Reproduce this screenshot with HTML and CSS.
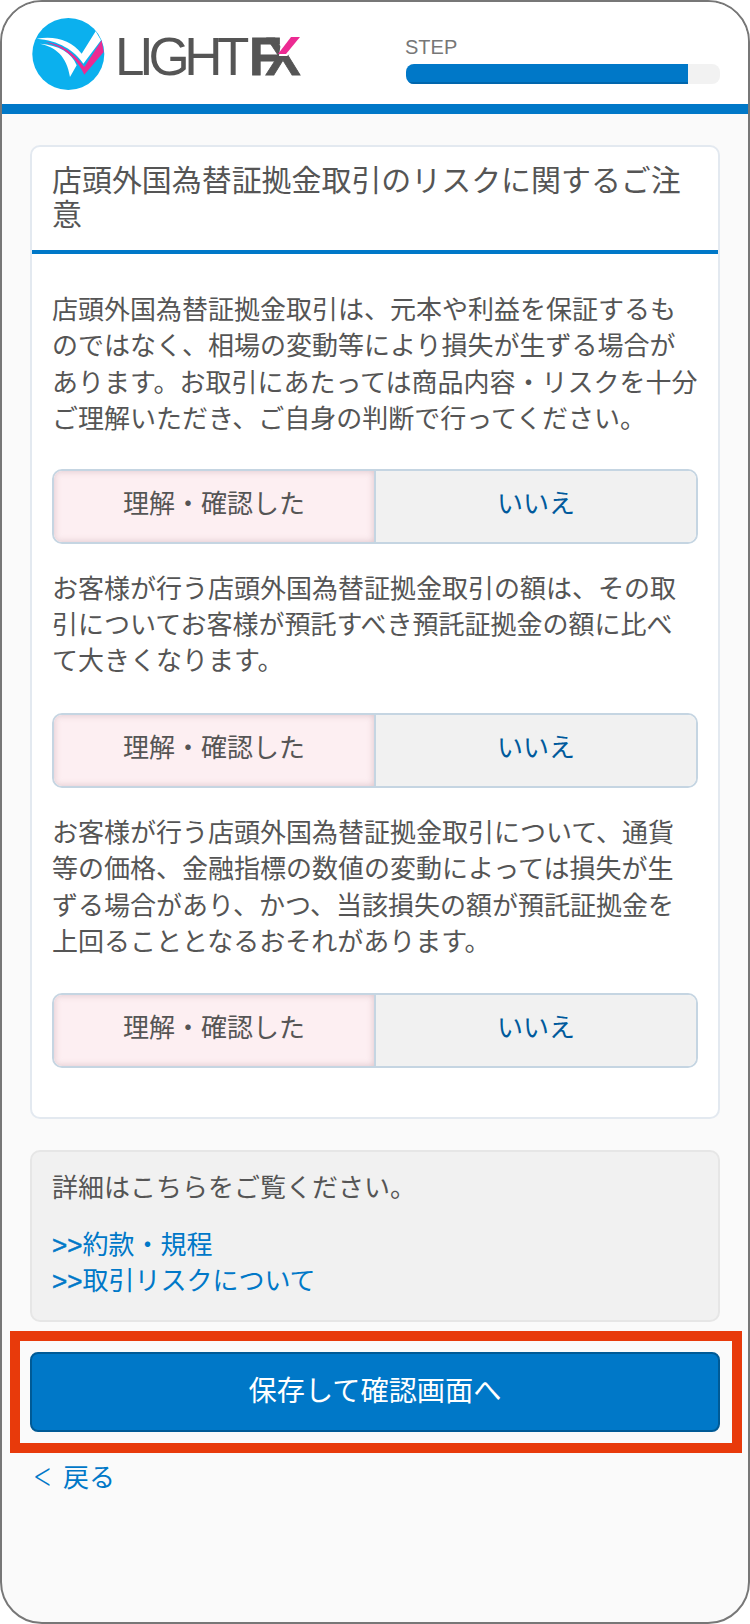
FILE: index.html
```html
<!DOCTYPE html>
<html lang="ja">
	<head>
		<meta charset="UTF-8" />
		<title>リスクに関するご注意</title>
		<link rel="stylesheet" href="styles.css">
	</head>
	<body>
		<div class="frame">
			<div class="header">
				<svg class="logo" width="280" height="84" viewBox="25 12 280 84">
					<circle cx="68.3" cy="54" r="36" fill="#0bb0ee" />
					<g transform="translate(25 12) scale(0.3333)">
						<path fill="#fff" d="M35 80C90 70 140 85 170 125L212 58L228 85L175 155C150 115 100 85 35 80Z" />
						<path fill="#fff" d="M45 95C90 105 125 130 135 195L155 160C140 120 100 100 45 95Z" />
						<path fill="#ec2a92" d="M60 90C110 95 150 125 178 165L230 85L236 120L178 188C155 140 120 105 60 90Z" />
					</g>
					<text class="logo-light" x="115" y="75">LIGHT</text>
					<text class="logo-fx" x="249" y="75">FX</text>
					<polygon fill="#fff" points="282,35 303,35 303,45 287,56 279,56" />
					<polygon fill="#ec2a92" points="291,37 300,37 286,54 278,54" />
				</svg>
				<div class="step">
					<span class="step-label">STEP</span>
					<div class="step-bar"><div class="step-fill"></div></div>
				</div>
			</div>
			<div class="main">
				<div class="card">
					<h2 class="card-title">店頭外国為替証拠金取引のリスクに関するご注意</h2>
					<div class="card-body">
						<p>店頭外国為替証拠金取引は、元本や利益を保証するも<br>のではなく、相場の変動等により損失が生ずる場合が<br>あります。お取引にあたっては商品内容・リスクを十分<br>ご理解いただき、ご自身の判断で行ってください。</p>
						<div class="choice">
							<span class="yes">理解・確認した</span>
							<span class="no">いいえ</span>
						</div>
						<p>お客様が行う店頭外国為替証拠金取引の額は、その取<br>引についてお客様が預託すべき預託証拠金の額に比べ<br>て大きくなります。</p>
						<div class="choice">
							<span class="yes">理解・確認した</span>
							<span class="no">いいえ</span>
						</div>
						<p>お客様が行う店頭外国為替証拠金取引について、通貨<br>等の価格、金融指標の数値の変動によっては損失が生<br>ずる場合があり、かつ、当該損失の額が預託証拠金を<br>上回ることとなるおそれがあります。</p>
						<div class="choice">
							<span class="yes">理解・確認した</span>
							<span class="no">いいえ</span>
						</div>
					</div>
				</div>
				<div class="well">
					<p>詳細はこちらをご覧ください。</p>
					<a href="#"><b>&gt;&gt;</b>約款・規程</a>
					<a href="#"><b>&gt;&gt;</b>取引リスクについて</a>
				</div>
			</div>
			<div class="save-box">
				<button class="save">保存して確認画面へ</button>
			</div>
			<a class="back" href="#"><span class="back-arrow">&lt;</span>戻る</a>
		</div>
	</body>
</html>
```

FILE: styles.css
```css
html,
body {
	margin: 0;
	background: #fff;
}
body {
	color: #555;
	font-family: "Liberation Sans", "Noto Sans CJK JP", sans-serif;
	font-size: 26px;
	line-height: 36.4px;
}
.frame {
	height: 1624px;
	box-sizing: border-box;
	border: 2px solid #777;
	border-radius: 42px;
	background: #fafafa;
	overflow: hidden;
}

.header {
	display: flex;
	justify-content: space-between;
	height: 102px;
	background: #fff;
	border-bottom: 10px solid #0078c8;
}
.logo {
	margin: 10px 0 0 23px;
}
.logo text {
	font-family: "Liberation Sans", sans-serif;
	font-size: 53px;
	fill: #555;
}
.logo .logo-light {
	letter-spacing: -5.4px;
}
.logo .logo-fx {
	font-weight: bold;
	letter-spacing: -16px;
	stroke: #555;
	stroke-width: 0.8px;
}
.step {
	width: 314px;
	margin-right: 28px;
	padding-top: 30px;
	font-size: 20px;
	line-height: 30px;
	color: #777;
}
.step-label {
	display: block;
	margin-left: -1px;
}
.step-bar {
	height: 20px;
	margin-top: 2px;
	background: #f2f2f2;
	border-radius: 8px;
	overflow: hidden;
}
.step-fill {
	width: 282px;
	height: 18px;
	background: #0078c8;
	border-bottom: 2px solid #0066ad;
}

.main {
	padding: 31px 28px 0;
}
.card {
	background: #fff;
	border: 2px solid #e3e9f0;
	border-radius: 10px;
}
.card-title {
	margin: 0;
	padding: 17px 20px 18px;
	border-bottom: 4px solid #0078c8;
	font-size: 29.95px;
	font-weight: normal;
	line-height: 34px;
}
.card-body {
	padding: 38px 20px 49px;
}
.card-body p {
	margin: 0 0 33px;
	white-space: nowrap;
}
.card-body p:first-child {
	margin-bottom: 31px;
}
.choice {
	display: flex;
	height: 75px;
	box-sizing: border-box;
	margin-bottom: 27px;
	border: 2px solid #c5d5e2;
	border-radius: 10px;
	overflow: hidden;
	text-align: center;
	line-height: 67px;
}
.choice:last-child {
	margin-bottom: 0;
}
.choice span {
	flex: 1 1 50%;
}
.yes {
	background: #fdeff2;
	box-shadow: inset 0 0 7px rgba(170, 130, 140, 0.4);
}
.no {
	background: #f1f1f1;
	border-left: 2px solid #c5d5e2;
	color: #005a9c;
}

.well {
	margin-top: 31px;
	padding: 18px 20px 20px;
	background: #f1f1f1;
	border: 2px solid #e6e6e6;
	border-radius: 10px;
}
.well p {
	margin: 0 0 20px;
}
.well a {
	display: block;
	color: #0078c8;
	text-decoration: none;
}
.well b {
	font-weight: normal;
	-webkit-text-stroke: 0.5px #0078c8;
}

.save-box {
	margin: 9px 6px 0 8px;
	padding: 11px 12px 11px 10px;
	border: 10px solid #e83a0b;
}
.save {
	display: block;
	width: 100%;
	height: 80px;
	padding: 0;
	background: #0078c8;
	border: 2px solid #005a96;
	border-radius: 8px;
	color: #fff;
	font: inherit;
	font-size: 28.2px;
}
.back {
	display: inline-block;
	margin: 7px 0 0 30px;
	color: #0078c8;
	text-decoration: none;
}
.back-arrow {
	margin-right: 9px;
	font-family: Inter, sans-serif;
	font-size: 34px;
	font-weight: 200;
	line-height: 0;
}
```
